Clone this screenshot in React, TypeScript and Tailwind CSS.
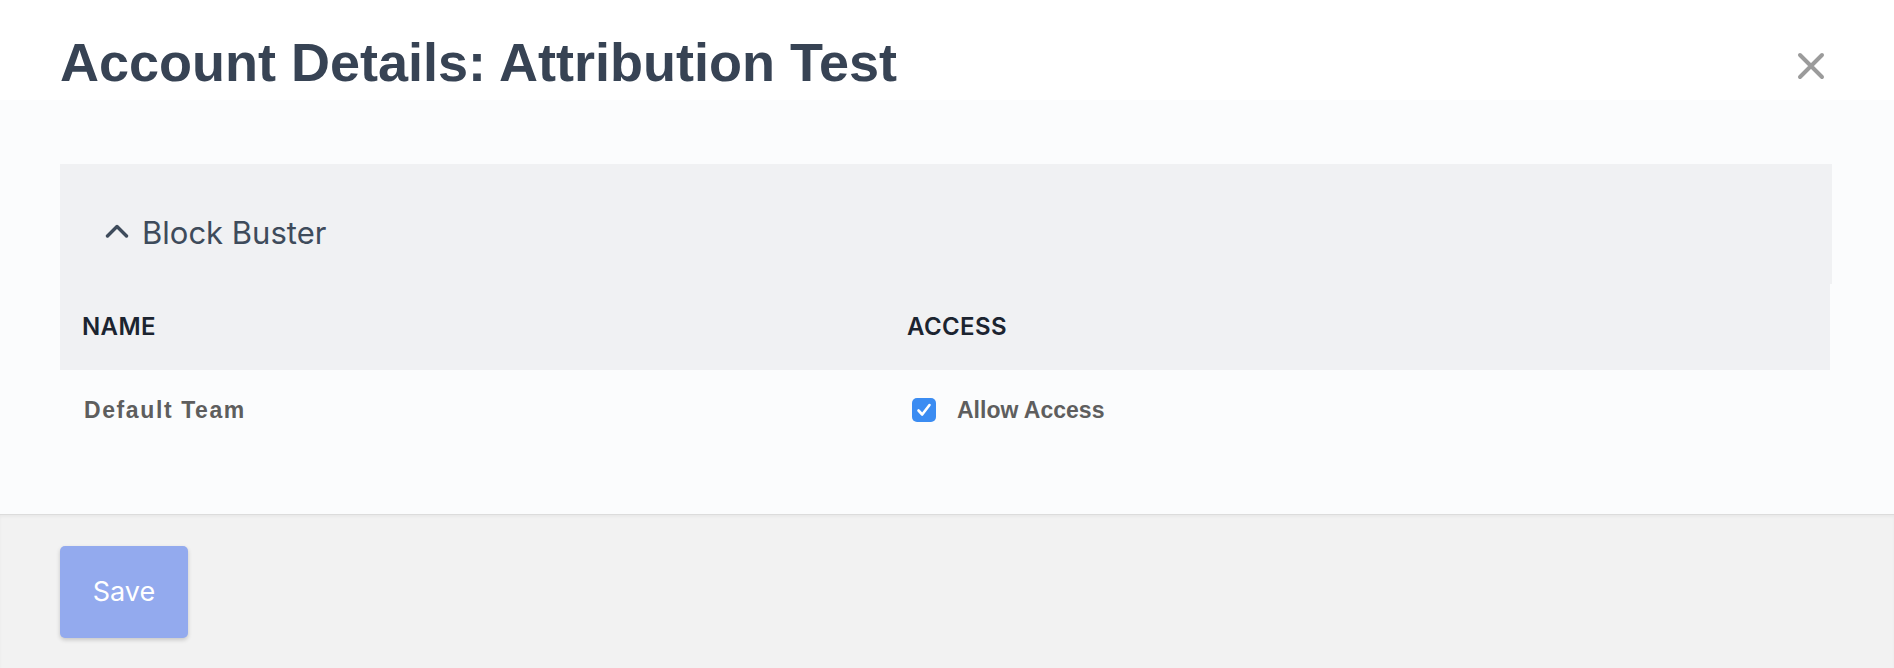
import { useState } from "react";

const TEAMS = [{ id: "default", name: "Default Team", allowed: true }];

export default function App() {
  const [open, setOpen] = useState(true);
  const [teams, setTeams] = useState(TEAMS);

  const toggle = (id: string) =>
    setTeams((t) => t.map((x) => (x.id === id ? { ...x, allowed: !x.allowed } : x)));

  return (
    <div className="flex h-[668px] w-full flex-col bg-white font-['Inter','Liberation_Sans',sans-serif]">
      {/* header */}
      <div className="flex h-[100px] shrink-0 items-start justify-between bg-white pl-[60px] pr-[69px]">
        <h1 className="pt-[32px] font-['Liberation_Sans','Arial',sans-serif] text-[54px] leading-[60px] font-bold text-[#374354]">
          Account Details: Attribution Test
        </h1>
        <button className="mt-[52px] text-[#9b9b9b]" aria-label="Close">
          <svg width="28" height="28" viewBox="0 0 28 28" fill="none">
            <path d="M3 3L25 25M25 3L3 25" stroke="currentColor" strokeWidth="4" strokeLinecap="round" />
          </svg>
        </button>
      </div>

      {/* body */}
      <div className="flex-1 bg-[#fbfcfd] pt-[64px] pl-[60px] pr-[62px]">
        <button
          onClick={() => setOpen(!open)}
          className="flex h-[120px] w-full items-start bg-[#f0f1f3] pt-[56px] pl-[45px] text-left"
        >
          <svg width="24" height="14" viewBox="0 0 24 14" fill="none" className="mt-[4px] text-[#3e4b5b]">
            <path
              d={open ? "M2.5 12L12 2.5L21.5 12" : "M2.5 2L12 11.5L21.5 2"}
              stroke="currentColor"
              strokeWidth="3.4"
              strokeLinecap="round"
              strokeLinejoin="round"
            />
          </svg>
          <span className="ml-[13px] text-[31px] leading-[26px] text-[#3e4b5b]">Block Buster</span>
        </button>

        {open && (
          <div className="pr-[2px]">
            <div className="grid h-[86px] grid-cols-[825px_1fr] items-center bg-[#f0f1f3] pl-[22px] text-[24px] font-semibold tracking-[0.4px] text-[#1b2430]">
              <div>NAME</div>
              <div>ACCESS</div>
            </div>
            {teams.map((t) => (
              <div key={t.id} className="grid h-[80px] grid-cols-[828px_1fr] items-center pl-[24px]">
                <div className="font-['Liberation_Sans','Arial',sans-serif] text-[23px] font-bold tracking-[1.6px] text-[#5e5e5e]">
                  {t.name}
                </div>
                <label className="flex cursor-pointer items-center">
                  <span
                    onClick={() => toggle(t.id)}
                    className={
                      t.allowed
                        ? "flex h-[24px] w-[24px] items-center justify-center rounded-[5px] bg-[#3b8cf2]"
                        : "flex h-[24px] w-[24px] items-center justify-center rounded-[5px] border-2 border-[#b5b5b5] bg-white"
                    }
                  >
                    {t.allowed && (
                      <svg width="18" height="18" viewBox="0 0 18 18" fill="none">
                        <path d="M3.5 9.5L7.2 13.5L14.5 4" stroke="white" strokeWidth="2.6" strokeLinecap="round" strokeLinejoin="round" />
                      </svg>
                    )}
                  </span>
                  <span className="ml-[21px] font-['Liberation_Sans','Arial',sans-serif] text-[23px] font-bold text-[#5e5e5e]">
                    Allow Access
                  </span>
                </label>
              </div>
            ))}
          </div>
        )}
      </div>

      {/* footer */}
      <div className="h-[154px] shrink-0 border-t border-[#dcdcdc] bg-[#f2f2f2] pt-[31px] pl-[60px] shadow-[inset_0_2px_3px_rgba(0,0,0,0.04)]">
        <button className="h-[92px] w-[128px] rounded-[5px] bg-[#93aaee] text-[27px] text-white shadow-[0_2px_4px_rgba(0,0,0,0.18)]">
          Save
        </button>
      </div>
    </div>
  );
}
